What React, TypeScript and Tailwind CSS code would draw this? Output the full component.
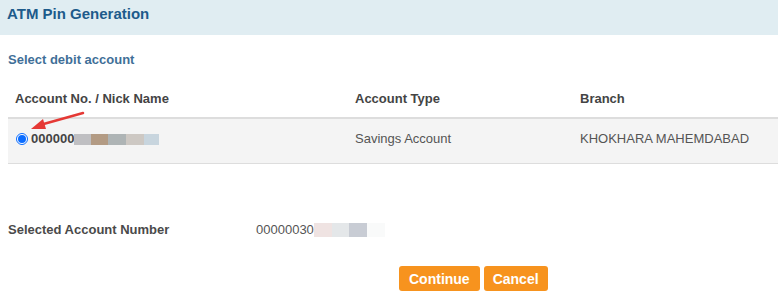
const rowBlur = ["#bfbfc2", "#b39b84", "#aeb4b5", "#cdc8c3", "#c8d5de"];
const valueBlur = ["#efe3e2", "#e4e7e9", "#c8ccd4", "#f9fafa"];

function BlurBlocks({ colors, widths, h }: { colors: string[]; widths: number[]; h: string }) {
  return (
    <span className="inline-flex align-middle">
      {colors.map((c, i) => (
        <span key={i} className={`inline-block ${h}`} style={{ backgroundColor: c, width: widths[i] }} />
      ))}
    </span>
  );
}

export default function App() {
  return (
    <div className="relative w-[778px] h-[300px] bg-white overflow-hidden font-['Liberation_Sans',Arial,sans-serif]">
      {/* header */}
      <div className="h-[35px] bg-[#e0edf2] pl-[7px] pt-[4px]">
        <h1 className="text-[15px] leading-[20px] font-bold text-[#1d5b8b]">ATM Pin Generation</h1>
      </div>

      <div className="pl-[8px] pt-[17px] text-[13px] leading-[16px] font-bold text-[#3f6f98]">
        Select debit account
      </div>

      {/* table */}
      <div className="ml-[8px] mt-[16px]">
        <div className="flex h-[35px] items-center pb-[3px] border-b-2 border-[#dddddd] text-[13px] font-bold text-[#444444]">
          <div className="w-[340px] pl-[7px]">Account No. / Nick Name</div>
          <div className="w-[225px] pl-[7px]">Account Type</div>
          <div className="flex-1 pl-[7px]">Branch</div>
        </div>
        <div className="flex h-[45px] items-center pb-[4px] bg-[#f4f4f4] border-b border-[#dddddd] text-[13px] text-[#555555]">
          <div className="w-[340px] pl-[8px] flex items-center">
            <span className="inline-flex w-[12px] h-[12px] rounded-full border border-[#0a6cff] items-center justify-center bg-white">
              <span className="w-[8px] h-[8px] rounded-full bg-[#0a6cff]" />
            </span>
            <span className="ml-[3px] font-bold text-[#444444]">000000</span>
            <BlurBlocks colors={rowBlur} widths={[17, 17, 18, 18, 15]} h="h-[11px]" />
          </div>
          <div className="w-[225px] pl-[7px]">Savings Account</div>
          <div className="flex-1 pl-[7px]">KHOKHARA MAHEMDABAD</div>
        </div>
      </div>

      {/* selected account */}
      <div className="flex items-center mt-[56px] pl-[8px] h-[20px] text-[13px]">
        <div className="w-[248px] font-bold text-[#4a4a4a]">Selected Account Number</div>
        <div className="flex items-center text-[#555555]">
          <span>00000030</span>
          <BlurBlocks colors={valueBlur} widths={[18, 17, 18, 18]} h="h-[14px]" />
        </div>
      </div>

      {/* buttons */}
      <div className="flex gap-[4px] mt-[26px] pl-[399px]">
        <button className="h-[25px] px-[10px] rounded-[3px] bg-[#f7931e] text-white text-[14px] font-bold leading-none">
          Continue
        </button>
        <button className="h-[25px] px-[9px] rounded-[3px] bg-[#f7931e] text-white text-[14px] font-bold leading-none">
          Cancel
        </button>
      </div>

      {/* annotation arrow */}
      <svg className="absolute left-0 top-0 pointer-events-none" width="778" height="300">
        <line x1="83" y1="113" x2="40" y2="125" stroke="#e53935" strokeWidth="2.5" strokeLinecap="round" />
        <polygon points="31,129 43,119 46,129" fill="#e53935" />
      </svg>
    </div>
  );
}
